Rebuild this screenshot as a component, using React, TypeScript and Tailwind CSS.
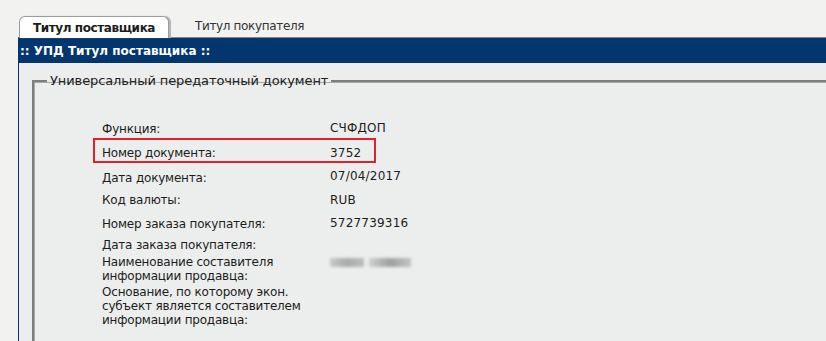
import React from 'react'

const font = { fontFamily: '"DejaVu Sans", Verdana, sans-serif' }

interface Row {
  label: string[]
  value?: string
  gap: number
  shift?: number
  blurred?: boolean
}

const rows: Row[] = [
  { label: ['Функция:'], value: 'СЧФДОП', gap: 0, shift: -1 },
  { label: ['Номер документа:'], value: '3752', gap: 10, shift: 0 },
  { label: ['Дата документа:'], value: '07/04/2017', gap: 11, shift: -2 },
  { label: ['Код валюты:'], value: 'RUB', gap: 8 },
  { label: ['Номер заказа покупателя:'], value: '5727739316', gap: 10, shift: -1 },
  { label: ['Дата заказа покупателя:'], gap: 7 },
  { label: ['Наименование составителя', 'информации продавца:'], gap: 3, blurred: true },
  { label: ['Основание, по которому экон.', 'субъект является составителем', 'информации продавца:'], gap: 2 },
]

function BlurredValue() {
  // redacted name in the screenshot
  return (
    <div className="flex items-center gap-[5px] pt-[3px] blur-[1.5px]">
      <div className="h-[9px] w-[34px] bg-gradient-to-r from-[#c9c9c9] via-[#a9a9a9] to-[#bdbdbd]" />
      <div className="h-[9px] w-[42px] bg-gradient-to-r from-[#d0d0d0] via-[#9e9e9e] to-[#c4c4c4]" />
    </div>
  )
}

export default function App() {
  return (
    <div className="min-h-screen overflow-hidden bg-[#f2f2f1] pl-[18px] pt-[15px] text-[#1c1c1c]" style={font}>
      {/* tabs */}
      <div className="relative z-10 flex h-[22px] items-end">
        <div className="ml-[1px] flex h-[22px] w-[150px] items-center justify-center rounded-t-[6px] border border-b-0 border-[#9c9c9c] bg-white text-[12px] font-bold tracking-[-0.4px] shadow-[2px_0_1px_#b5b5b5] -mb-[1px]">
          Титул поставщика
        </div>
        <div className="ml-[26px] flex h-[22px] items-center text-[12px] tracking-[-0.35px] text-[#333]">Титул покупателя</div>
      </div>

      {/* panel */}
      <div className="h-[320px] w-[840px] border-l border-t border-l-[#03366f] border-t-[#858585] bg-[#eceeed]">
        <div className="flex h-[25px] items-center bg-[#03366f] pl-[1px] text-[12px] font-bold text-white">
          :: УПД Титул поставщика ::
        </div>

        <fieldset className="ml-[13px] mt-[10px] min-h-[300px] border-2 border-[#7d7d7d] border-r-0 border-b-0 shadow-[inset_1px_1px_0_#a8a8a8]">
          <legend className="ml-[13px] px-[3px] text-[13px] leading-[15px] tracking-[-0.1px] text-[#222]">
            Универсальный передаточный документ
          </legend>

          <div className="relative pl-[68px] pt-[34px] text-[12px] leading-[14px] tracking-[-0.2px]">
            {/* highlight frame */}
            <div className="absolute left-[59px] top-[50px] h-[25px] w-[283px] border-2 border-[#e3212b]" />

            {rows.map((r, i) => (
              <div key={i} className="flex items-start" style={{ marginTop: r.gap }}>
                <div className="w-[228px]">
                  {r.label.map((l) => (
                    <div key={l}>{l}</div>
                  ))}
                </div>
                {r.value && (
                  <div className="tracking-[0.2px]" style={{ marginTop: r.shift ?? 0 }}>
                    {r.value}
                  </div>
                )}
                {r.blurred && <BlurredValue />}
              </div>
            ))}
          </div>
        </fieldset>
      </div>
    </div>
  )
}
